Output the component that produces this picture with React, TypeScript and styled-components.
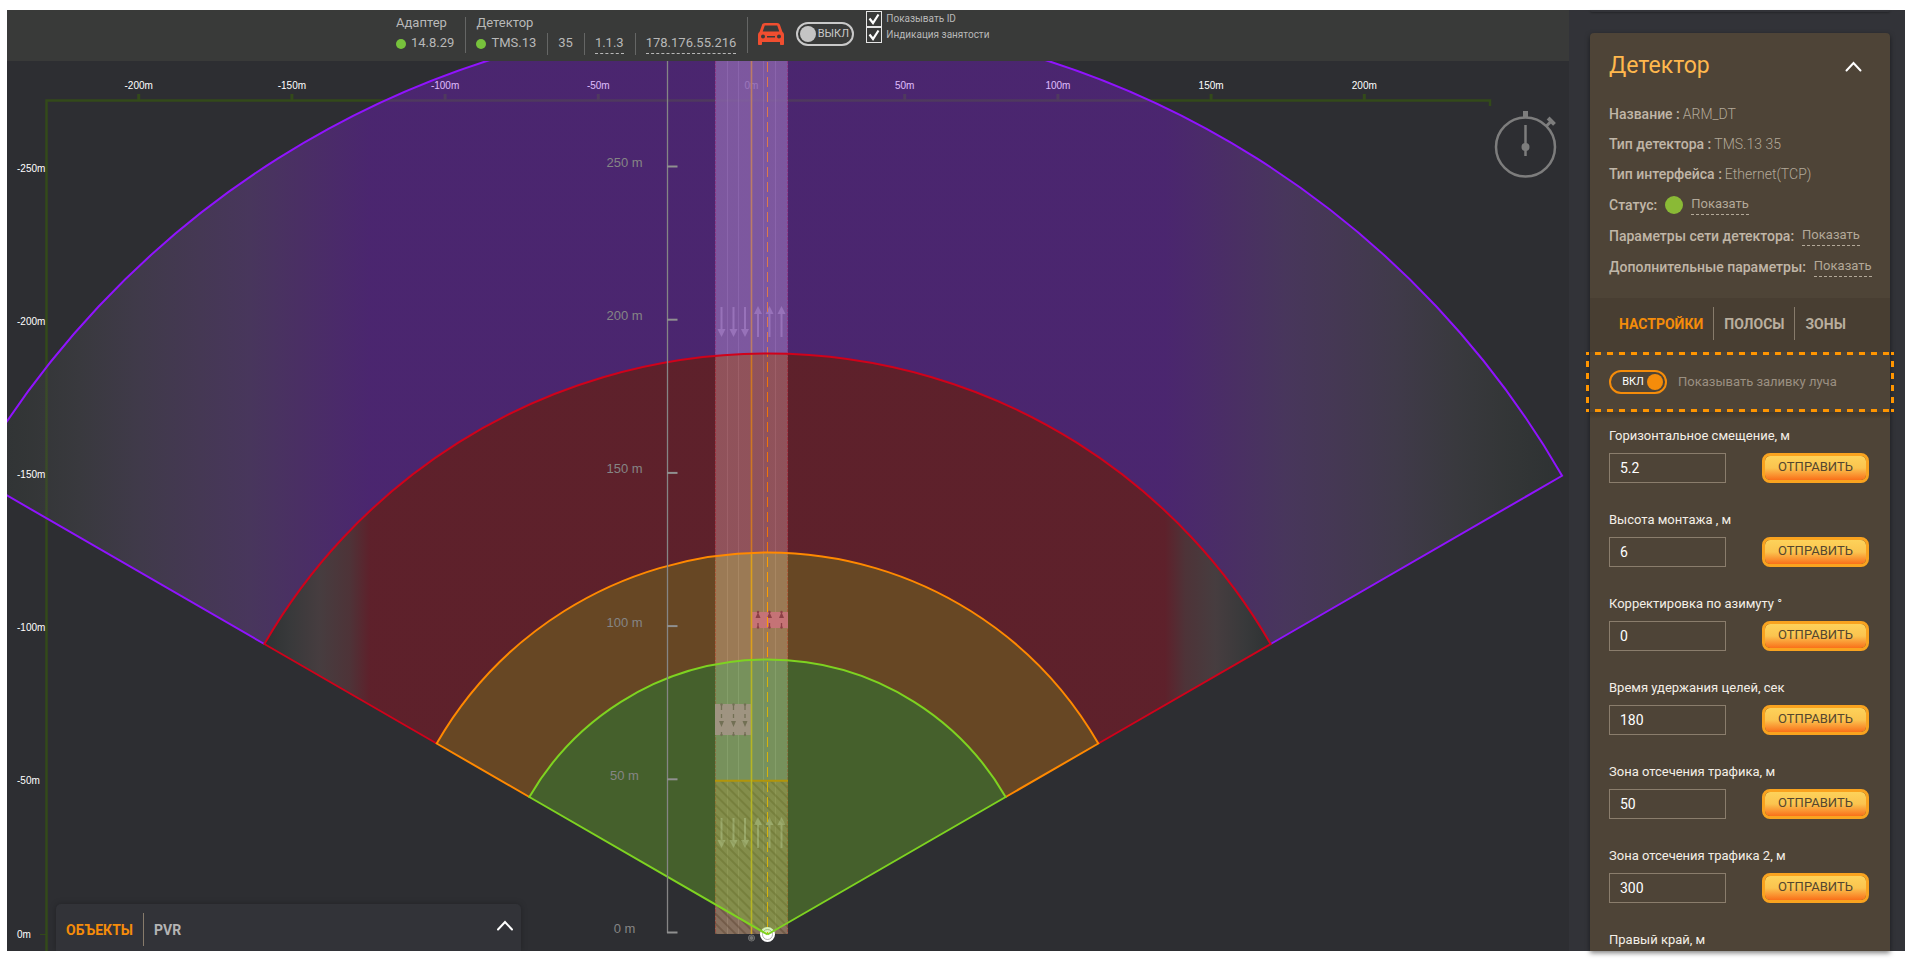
import React from "react";
import styled, { createGlobalStyle } from "styled-components";

const GlobalStyle = createGlobalStyle`
  *, *::before, *::after { box-sizing: border-box; }
  body {
    margin: 0;
    background: #fff;
    font-family: Roboto, "Liberation Sans", sans-serif;
    font-size: 14px;
    line-height: 20px;
    color: #b8b8b8;
  }
  button, input { font: inherit; }
`;

const Frame = styled.div`
  display: flex;
  height: calc(100vh - 20px);
  margin: 10px 6px 10px 7px;
  background: #323338;
`;

const Main = styled.main`
  flex: 1;
  min-width: 0;
  display: flex;
  flex-direction: column;
  background: #2d2e32;
`;

/* ---------- top bar ---------- */

const TopBar = styled.header`
  display: flex;
  align-items: flex-start;
  height: 51px;
  flex: none;
  padding-left: 389px;
  background: #393a39;
  font-size: 13px;
  white-space: nowrap;
`;

const DeviceGroup = styled.section`
  position: relative;
  padding: 3px 12px 0 0;
  margin: 0 10px 0 0;
  &::after {
    content: "";
    position: absolute;
    right: 0;
    top: 7px;
    height: 36px;
    width: 1px;
    background: #656665;
  }
`;

const DeviceTitle = styled.div`
  line-height: 20px;
`;

const DeviceLine = styled.div`
  display: flex;
`;

const DeviceCell = styled.span`
  display: flex;
  align-items: flex-start;
  gap: 5px;
  height: 22px;
  & + & {
    margin-left: 11px;
    padding-left: 10px;
    border-left: 1px solid #656665;
  }
`;

const Dot = styled.i<{ $size: number; $color: string }>`
  flex: none;
  align-self: center;
  width: ${(p) => p.$size}px;
  height: ${(p) => p.$size}px;
  border-radius: 50%;
  background: ${(p) => p.$color};
`;

const DashedLink = styled.a`
  color: inherit;
  text-decoration: none;
  line-height: 20px;
  border-bottom: 1px dashed currentColor;
`;

const BarTools = styled.div`
  display: flex;
  align-items: center;
  gap: 12px;
  height: 48px;
`;

const Car = styled.svg`
  width: 26px;
  height: 22px;
`;

const Switch = styled.label<{ $on: boolean }>`
  display: grid;
  align-items: center;
  grid-template-columns: ${(p) => (p.$on ? "1fr 16px" : "16px 1fr")};
  flex: none;
  width: 58px;
  height: 24px;
  padding: 0 2px;
  border: 2px solid ${(p) => (p.$on ? "#f58c0a" : "#c9c9c9")};
  border-radius: 12px;
  font-size: 11px;
  line-height: 20px;
  color: ${(p) => (p.$on ? "#fff" : "#c9c9c9")};
  text-align: center;
`;

const SwitchInput = styled.input<{ $on: boolean }>`
  appearance: none;
  grid-row: 1;
  grid-column: ${(p) => (p.$on ? 2 : 1)};
  width: 16px;
  height: 16px;
  margin: 0;
  border-radius: 50%;
  background: ${(p) => (p.$on ? "#f58c0a" : "#c4c4c4")};
`;

const SwitchText = styled.span<{ $on: boolean }>`
  grid-row: 1;
  grid-column: ${(p) => (p.$on ? 1 : 2)};
  padding-left: ${(p) => (p.$on ? 6 : 0)}px;
`;

const CheckList = styled.div`
  align-self: flex-start;
  display: flex;
  flex-direction: column;
  padding-top: 1px;
`;

const CheckLabel = styled.label`
  display: flex;
  align-items: center;
  gap: 4px;
  height: 16px;
  font-size: 10px;
  line-height: 16px;
`;

const CheckBox = styled.span`
  display: grid;
  width: 16px;
  height: 16px;
  border: 1px solid #e6e6e6;
  & > * { grid-area: 1 / 1; margin: 0; width: 14px; height: 14px; }
  & > input { appearance: none; }
  & > svg { pointer-events: none; }
`;

/* ---------- radar ---------- */

const Stage = styled.div`
  position: relative;
  flex: 1;
  min-height: 0;
  overflow: hidden;
`;

const RadarSvg = styled.svg`
  display: block;
  width: 100%;
  height: 100%;
  font-family: "Liberation Sans", sans-serif;
`;

const Dock = styled.section`
  position: absolute;
  left: 49px;
  bottom: 0;
  width: 465px;
  height: 47px;
  padding: 9px 8px 0 0;
  display: flex;
  justify-content: space-between;
  align-items: flex-start;
  background: #323338;
  border-radius: 5px 5px 0 0;
  box-shadow: 0 0 6px rgba(0, 0, 0, 0.25);
`;

const TabRow = styled.nav`
  display: flex;
`;

const Tab = styled.button<{ $active?: boolean; $color: string; $line: string }>`
  height: 33px;
  padding: 0 10px;
  border: 0;
  background: none;
  font-size: 14px;
  font-weight: 700;
  color: ${(p) => (p.$active ? "#f58c0a" : p.$color)};
  & + & { border-left: 1px solid ${(p) => p.$line}; }
`;

const IconButton = styled.button<{ $width: number }>`
  display: grid;
  place-items: center;
  width: ${(p) => p.$width}px;
  height: 24px;
  padding: 0;
  border: 0;
  background: none;
  color: #fff;
`;

/* ---------- side panel ---------- */

const Side = styled.aside`
  flex: none;
  width: 336px;
  display: flex;
  flex-direction: column;
  gap: 21px;
  padding: 0 15px 0 21px;
`;

const CardAbove = styled.div`
  height: 2px;
  border-radius: 0 0 5px 5px;
  box-shadow: 0 1px 2px rgba(0, 0, 0, 0.3);
`;

const Card = styled.section`
  flex: 1;
  min-height: 0;
  display: flex;
  flex-direction: column;
  background: #4e4437;
  border-radius: 4px 4px 0 0;
  box-shadow: 0 2px 5px rgba(0, 0, 0, 0.5);
`;

const Info = styled.div`
  flex: none;
  display: flex;
  flex-direction: column;
  gap: 10px;
  padding: 17px 19px 21px;
  color: #b3a999;
`;

const CardHead = styled.div`
  display: flex;
  justify-content: space-between;
  align-items: center;
  height: 32px;
  margin-bottom: 12px;
`;

const CardTitle = styled.h2`
  margin: 0;
  font-size: 23px;
  line-height: 32px;
  font-weight: 400;
  color: #ffb84d;
`;

const InfoRow = styled.div`
  display: flex;
  gap: 3px;
  height: 20px;
  font-size: 14px;
  font-weight: 300;
  white-space: nowrap;
`;

const LinkRow = styled(InfoRow)`
  gap: 8px;
  height: 21px;
  font-weight: 400;
  & > a { font-size: 13px; }
`;

const InfoName = styled.span`
  font-weight: 500;
  color: #c0b6a7;
`;

const LinkName = styled(InfoName)`
  line-height: 22px;
`;

const CardTabs = styled.div`
  flex: none;
  height: 54px;
  padding: 9px 19px;
  background: #483e32;
`;

const dashes = (dir: string) =>
  `repeating-linear-gradient(${dir}, #ff9500 0 3px, transparent 3px 9px, #ff9500 9px 12px)`;

const BeamRow = styled.div`
  flex: none;
  display: flex;
  align-items: center;
  gap: 11px;
  height: 60px;
  margin: 0 -4px;
  padding-left: 23px;
  background:
    ${dashes("90deg")} 0 0 / 100% 3px no-repeat,
    ${dashes("90deg")} 0 100% / 100% 3px no-repeat,
    ${dashes("180deg")} 0 0 / 3px 100% no-repeat,
    ${dashes("180deg")} 100% 0 / 3px 100% no-repeat;
`;

const BeamText = styled.span`
  font-size: 13px;
  line-height: 22px;
  color: #9b9082;
`;

const Fields = styled.form`
  flex: 1;
  min-height: 0;
  overflow: hidden;
  padding: 14px 21px 0 19px;
  display: flex;
  flex-direction: column;
  gap: 27px;
  background: linear-gradient(#41382d, #4e4437 7px);
`;

const Field = styled.div`
  flex: none;
  display: grid;
  grid-template-columns: 117px 107px;
  justify-content: space-between;
  gap: 7px 0;
`;

const FieldLabel = styled.label`
  grid-column: 1 / -1;
  font-size: 13px;
  color: #f4efe7;
`;

const FieldInput = styled.input`
  width: 100%;
  height: 30px;
  padding: 0 10px;
  border: 1px solid #8a7d6c;
  background: transparent;
  color: #fff;
  outline: 0;
`;

const SendButton = styled.button`
  height: 30px;
  padding: 0 0 2px;
  border: 3px solid #f9a31f;
  border-radius: 8px;
  background: linear-gradient(#fdd25a, #fbc44f 50%, #f9701a) padding-box;
  font-size: 13px;
  color: #54462f;
`;

/* ---------- data ---------- */

const FIELDS: [string, string | null][] = [
  ["Горизонтальное смещение, м", "5.2"],
  ["Высота монтажа , м", "6"],
  ["Корректировка по азимуту °", "0"],
  ["Время удержания целей, сек", "180"],
  ["Зона отсечения трафика, м", "50"],
  ["Зона отсечения трафика 2, м", "300"],
  ["Правый край, м", null],
];

const STEP = 153.2;
const ZERO_X = 744.5;
const APEX_X = 760.5;
const APEX_Y = 873.5;

const BEAMS = [
  { r: 917.5, inner: 581, stroke: "#9013fe", fill: "url(#beamFar)" },
  { r: 581, inner: 382, stroke: "#d0021b", fill: "url(#beamMid)" },
  { r: 382, inner: 275, stroke: "#ff8900", fill: "rgba(255,137,0,.28)" },
  { r: 275, inner: 0, stroke: "#7ed321", fill: "rgba(126,211,33,.3)" },
];

const edge = (r: number, side: 1 | -1) =>
  `${APEX_X + side * r * Math.cos(Math.PI / 6)} ${APEX_Y - r / 2}`;

const outline = (r: number, inner: number) =>
  `M${edge(inner, -1)}L${edge(r, -1)}A${r} ${r} 0 0 1 ${edge(r, 1)}L${edge(inner, 1)}`;

const ring = (r: number, inner: number) =>
  outline(r, inner) + (inner ? `A${inner} ${inner} 0 0 0 ${edge(inner, -1)}` : "") + "Z";

const fade = (stops: [number, string][]) => [
  ...stops,
  ...[...stops].reverse().map(([o, c]): [number, string] => [1 - o, c]),
];

const FAR = fade([
  [0, "rgb(48,59,53)"],
  [0.035, "rgb(66,72,66)"],
  [0.067, "rgb(85,83,90)"],
  [0.105, "rgb(108,86,130)"],
  [0.143, "rgb(125,79,163)"],
  [0.174, "rgb(135,73,190)"],
  [0.206, "rgb(142,49,217)"],
  [0.25, "#9013fe"],
]);

const MID = fade([
  [0, "rgb(48,59,53)"],
  [0.025, "rgb(82,83,78)"],
  [0.055, "rgb(130,96,95)"],
  [0.085, "rgb(155,63,70)"],
  [0.105, "#d0021b"],
]);

const TOP_TICKS = [-4, -3, -2, -1, 0, 1, 2, 3, 4];
const RANGE_TICKS = [0, 1, 2, 3, 4, 5];
const DOWN = [714.5, 726.5, 738];
const UP = [751, 762.5, 774.5];

const LaneArrows = ({ y }: { y: number }) => (
  <g fill="#fff" stroke="#fff" opacity=".28">
    {DOWN.map((x) => (
      <g key={x}>
        <path d={`M${x} ${y}v24`} strokeWidth="2" />
        <path d={`M${x - 4} ${y + 22}h8l-4 8z`} stroke="none" />
      </g>
    ))}
    {UP.map((x) => (
      <g key={x}>
        <path d={`M${x} ${y + 6}v24`} strokeWidth="2" />
        <path d={`M${x - 4} ${y + 7}h8l-4 -8z`} stroke="none" />
      </g>
    ))}
  </g>
);

const Radar = () => (
  <RadarSvg viewBox="0 0 1562 890" preserveAspectRatio="xMidYMax slice">
    <defs>
      {([["beamFar", FAR], ["beamMid", MID]] as const).map(([id, stops]) => (
        <linearGradient id={id} key={id}>
          {stops.map(([o, c]) => (
            <stop key={o} offset={o} stopColor={c} stopOpacity=".3" />
          ))}
        </linearGradient>
      ))}
      <pattern id="hatch" width="7" height="7" patternUnits="userSpaceOnUse" patternTransform="rotate(-45)">
        <path d="M3 0v7" stroke="#5c4330" strokeWidth="1.3" />
      </pattern>
    </defs>

    <g fill="none" stroke="#334a1a" strokeWidth="3">
      <path d="M39.5 890V39.5H1483V45" strokeWidth="2.5" />
      <path d="M33 873.5h6" strokeWidth="1" />
      {TOP_TICKS.map((n) => (
        <path key={n} d={`M${ZERO_X + n * STEP} 33v6`} />
      ))}
    </g>
    <g fill="#fff" fontSize="10" textAnchor="middle">
      {TOP_TICKS.map((n) => (
        <text key={n} x={ZERO_X + n * STEP} y="28">{`${n * 50}m`}</text>
      ))}
    </g>

    <rect x="708" width="73" height="873" fill="#878787" opacity=".8" />
    <path d="M708.5 0V873M780.5 0V873" stroke="#90404a" strokeDasharray="3 1" opacity=".8" />
    <path d="M720.5 0V873M731.5 0V873M756.5 0V873M768.5 0V873" stroke="#fff" opacity=".13" />
    <rect x="708" y="720" width="73" height="153" fill="rgba(212,97,0,.2)" />
    <rect x="708" y="720" width="73" height="153" fill="url(#hatch)" opacity=".7" />
    <path d="M708 719.8h73" stroke="#c87a00" strokeWidth="2" />
    <rect x="708" y="643" width="36" height="31" fill="#ae79ab" />
    <rect x="745" y="551" width="36" height="16" fill="#af6ba4" />
    <LaneArrows y={246} />
    <LaneArrows y={757} />
    <g fill="#6e456b" stroke="#6e456b">
      {DOWN.map((x) => (
        <g key={x}>
          <path d={`M${x} 644v5M${x} 653v4M${x} 671v3`} strokeWidth="1.3" />
          <path d={`M${x - 2.5} 660h5l-2.5 6z`} stroke="none" />
          <circle cx={x} cy="643.5" r="1.2" stroke="none" />
          <circle cx={x} cy="674" r="1.2" stroke="none" />
        </g>
      ))}
    </g>
    <g fill="#602561" stroke="#602561">
      {UP.map((x) => (
        <g key={x}>
          <path d={`M${x} 562v4`} strokeWidth="1.3" />
          <path d={`M${x - 2.5} 557h5l-2.5 -6z`} stroke="none" />
          <circle cx={x} cy="551" r="1.2" stroke="none" />
          <circle cx={x} cy="566.5" r="1.2" stroke="none" />
        </g>
      ))}
    </g>
    <path d={`M${ZERO_X} 0V873`} stroke="#cfa826" strokeWidth="1.6" />
    <circle cx={ZERO_X} cy="877" r="3" fill="#777" stroke="#777" />
    <circle cx={ZERO_X} cy="877" r="2.3" fill="none" stroke="#3b3c3e" strokeWidth=".7" />
    <circle cx={APEX_X} cy="873.5" r="7.5" fill="#fff" />
    <circle cx={APEX_X} cy="873.5" r="5" fill="none" stroke="#9a9a9a" strokeWidth=".8" />
    <path d={`M${APEX_X} 1V873`} stroke="#ffa500" strokeDasharray="10 5" />

    {BEAMS.map((b) => (
      <path key={b.r} d={ring(b.r, b.inner)} fill={b.fill} />
    ))}
    {BEAMS.map((b) => (
      <path key={b.r} d={outline(b.r, b.inner)} fill="none" stroke={b.stroke} strokeWidth="2" />
    ))}

    <g fill="#fff" fontSize="10">
      {RANGE_TICKS.map((n) => (
        <text key={n} x="10" y={876.5 - n * STEP}>{n ? `-${n * 50}m` : "0m"}</text>
      ))}
    </g>
    <path d="M660.5 0V872" stroke="#858585" strokeWidth="1.3" />
    {RANGE_TICKS.map((n) => (
      <g key={n}>
        <path d={`M660 ${871.5 - n * STEP}h10.5`} stroke="#909090" strokeWidth="2" />
        <text x="617.5" y={872 - n * STEP} textAnchor="middle" fontSize="13" fill="#858585">
          {`${n * 50} m`}
        </text>
      </g>
    ))}

    <g transform="translate(1518.5 86)" stroke="#7d7d7d" fill="none" strokeWidth="2.5">
      <circle r="29.5" />
      <path d="M0 -36v6" strokeWidth="5" />
      <path d="M0 -22V9" />
      <circle r="3" fill="#7d7d7d" strokeWidth="2" />
      <g transform="rotate(45)">
        <path d="M0 -36v6" strokeWidth="3" />
        <path d="M-4.5 -36.5h9" strokeWidth="4" />
      </g>
    </g>
  </RadarSvg>
);

const Chevron = ({ w }: { w: number }) => (
  <svg width={w} height="11" viewBox="0 0 16 11" fill="none" stroke="currentColor" strokeWidth="2">
    <path d="M1 9.500 8 2l7 7.500" strokeLinecap="round" />
  </svg>
);

const Toggle = ({ on, text, id }: { on: boolean; text: string; id: string }) => (
  <Switch $on={on} htmlFor={id}>
    <SwitchInput $on={on} type="checkbox" role="switch" id={id} defaultChecked={on} />
    <SwitchText $on={on}>{text}</SwitchText>
  </Switch>
);

const Check = ({ text }: { text: string }) => (
  <CheckLabel>
    <CheckBox>
      <input type="checkbox" defaultChecked />
      <svg viewBox="0 0 14 14" fill="none" stroke="#fff" strokeWidth="2.2">
        <path d="M2.5 6.5 6 11 11.5 2.5" />
      </svg>
    </CheckBox>
    {text}
  </CheckLabel>
);

export default function App() {
  return (
    <>
      <GlobalStyle />
      <Frame>
        <Main>
          <TopBar>
            <DeviceGroup>
              <DeviceTitle>Адаптер</DeviceTitle>
              <DeviceLine>
                <DeviceCell>
                  <Dot $size={10} $color="#77c23c" />
                  14.8.29
                </DeviceCell>
              </DeviceLine>
            </DeviceGroup>
            <DeviceGroup>
              <DeviceTitle>Детектор</DeviceTitle>
              <DeviceLine>
                <DeviceCell>
                  <Dot $size={10} $color="#77c23c" />
                  TMS.13
                </DeviceCell>
                <DeviceCell>35</DeviceCell>
                <DeviceCell>
                  <DashedLink href="#version">1.1.3</DashedLink>
                </DeviceCell>
                <DeviceCell>
                  <DashedLink href="#address">178.176.55.216</DashedLink>
                </DeviceCell>
              </DeviceLine>
            </DeviceGroup>
            <BarTools>
              <Car viewBox="0 0 26 22" fill="#f04e30">
                <path
                  fillRule="evenodd"
                  d="M7 0h12c1.600 0 2.600.8 3.100 2.200L24.500 9c1 .8 1.500 1.700 1.500 3v9c0 .6-.4 1-1 1h-2c-.6 0-1-.4-1-1v-2H4v2c0 .6-.4 1-1 1H1c-.6 0-1-.4-1-1v-9c0-1.300.5-2.200 1.500-3l2.400-6.800C4.400.8 5.400 0 7 0zM6.800 2.500 4.700 8.500h16.600l-2.100-6zM5 11.500a2 2 0 1 0 0 4 2 2 0 0 0 0-4zm16 0a2 2 0 1 0 0 4 2 2 0 0 0 0-4zM9 13v1.500h8V13z"
                />
              </Car>
              <Toggle on={false} text="ВЫКЛ" id="traffic" />
              <CheckList>
                <Check text="Показывать ID" />
                <Check text="Индикация занятости" />
              </CheckList>
            </BarTools>
          </TopBar>
          <Stage>
            <Radar />
            <Dock>
              <TabRow>
                <Tab $active $color="#b4b4b4" $line="#77776f">ОБЪЕКТЫ</Tab>
                <Tab $color="#b4b4b4" $line="#77776f">PVR</Tab>
              </TabRow>
              <IconButton $width={16} aria-label="Развернуть">
                <Chevron w={16} />
              </IconButton>
            </Dock>
          </Stage>
        </Main>
        <Side>
          <CardAbove />
          <Card>
            <Info>
              <CardHead>
                <CardTitle>Детектор</CardTitle>
                <IconButton $width={36} aria-label="Свернуть">
                  <Chevron w={17} />
                </IconButton>
              </CardHead>
              <InfoRow><InfoName>Название :</InfoName>ARM_DT</InfoRow>
              <InfoRow><InfoName>Тип детектора :</InfoName>TMS.13 35</InfoRow>
              <InfoRow><InfoName>Тип интерфейса :</InfoName>Ethernet(TCP)</InfoRow>
              <LinkRow>
                <LinkName>Статус:</LinkName>
                <Dot $size={18} $color="#8aba36" />
                <DashedLink href="#status">Показать</DashedLink>
              </LinkRow>
              <LinkRow>
                <LinkName>Параметры сети детектора:</LinkName>
                <DashedLink href="#network">Показать</DashedLink>
              </LinkRow>
              <LinkRow>
                <LinkName>Дополнительные параметры:</LinkName>
                <DashedLink href="#extra">Показать</DashedLink>
              </LinkRow>
            </Info>
            <CardTabs>
              <TabRow>
                <Tab $active $color="#b9ae9e" $line="#877b6b">НАСТРОЙКИ</Tab>
                <Tab $color="#b9ae9e" $line="#877b6b">ПОЛОСЫ</Tab>
                <Tab $color="#b9ae9e" $line="#877b6b">ЗОНЫ</Tab>
              </TabRow>
            </CardTabs>
            <BeamRow>
              <Toggle on text="ВКЛ" id="beam" />
              <BeamText>Показывать заливку луча</BeamText>
            </BeamRow>
            <Fields onSubmit={(e) => e.preventDefault()}>
              {FIELDS.map(([label, value], i) => (
                <Field key={label}>
                  <FieldLabel htmlFor={`field-${i}`}>{label}</FieldLabel>
                  {value !== null && (
                    <>
                      <FieldInput id={`field-${i}`} defaultValue={value} />
                      <SendButton>ОТПРАВИТЬ</SendButton>
                    </>
                  )}
                </Field>
              ))}
            </Fields>
          </Card>
        </Side>
      </Frame>
    </>
  );
}
